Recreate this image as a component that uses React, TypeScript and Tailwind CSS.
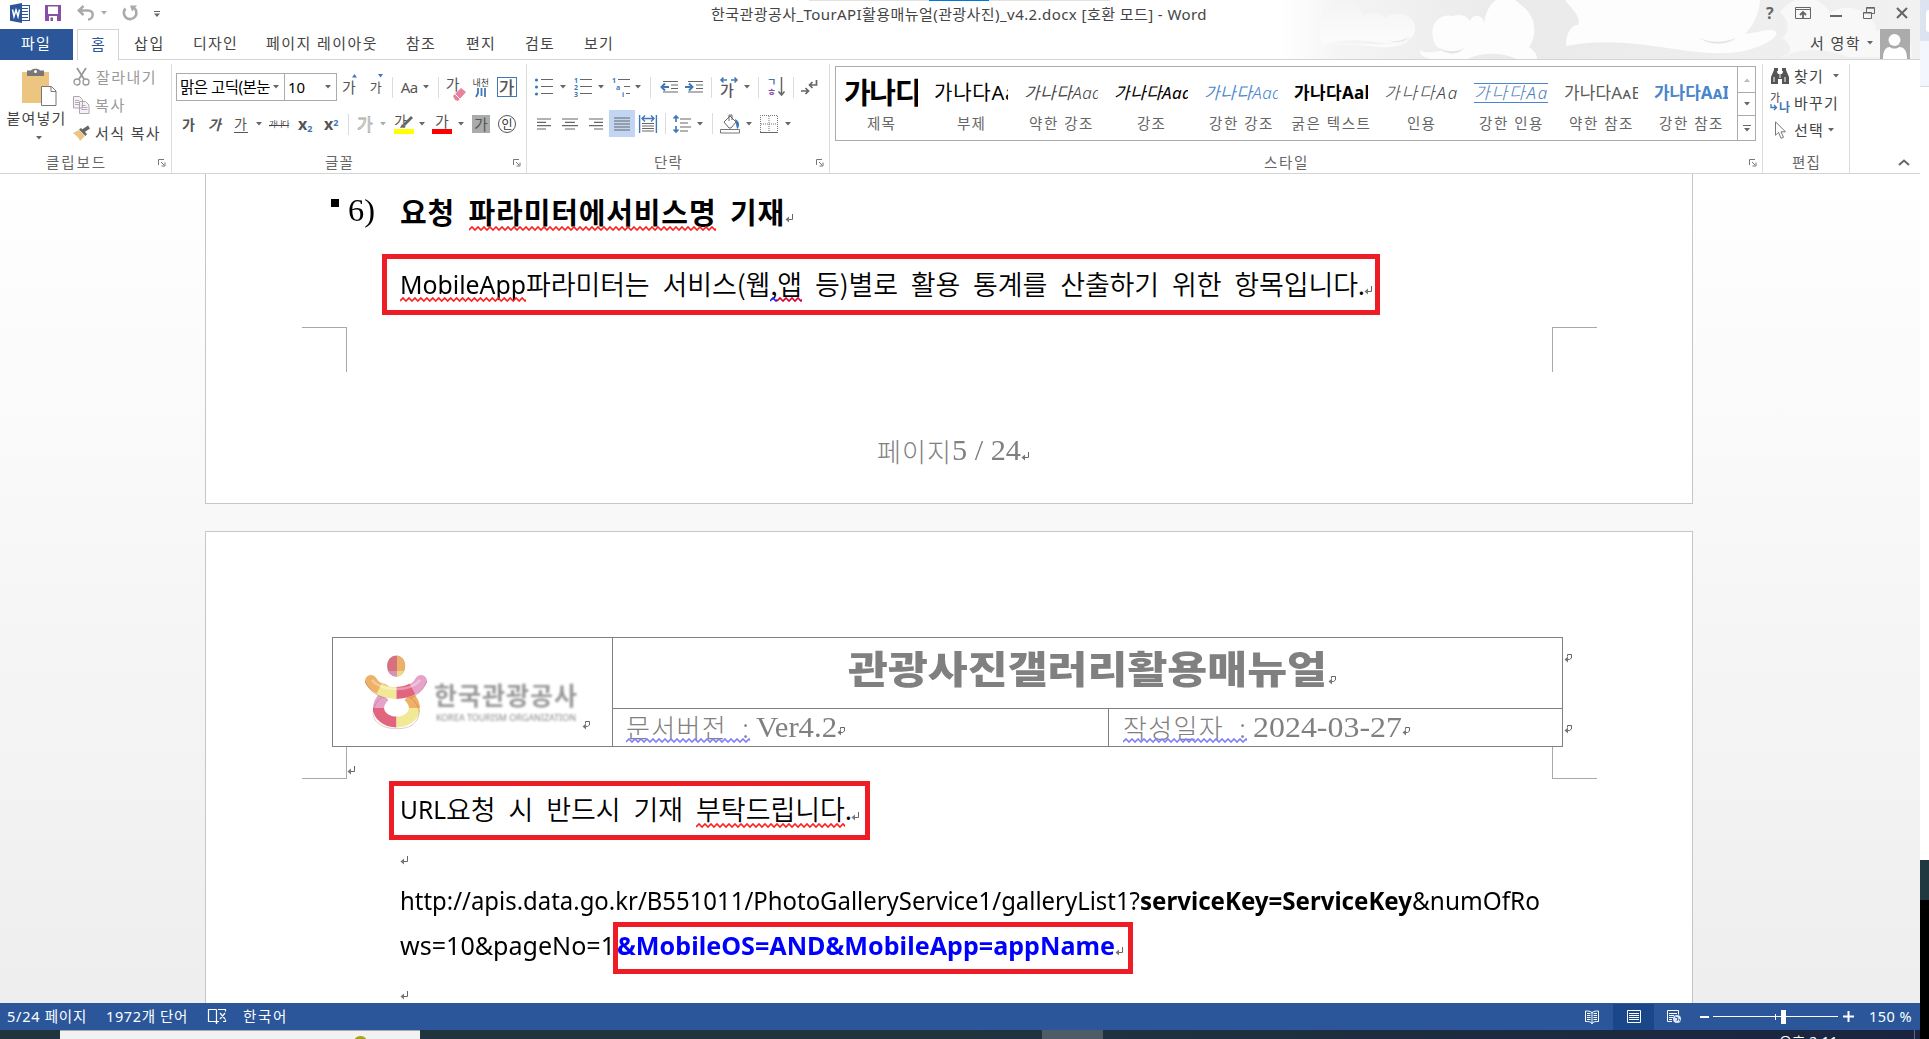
import { useLayoutEffect, useRef, type ReactNode } from 'react';

const UI = "font-['Noto_Sans','Noto_Sans_CJK_KR',sans-serif]";
const KR = "font-['Noto_Sans_CJK_KR',sans-serif]";
const SERIF = "font-['Liberation_Serif','Noto_Sans_CJK_KR',serif]";

/* Text run fitted to a width, either by tracking or by horizontal stretch. */
function T({ w, className = '', stretch = false, children }: { w: number; className?: string; stretch?: boolean; children: ReactNode }) {
  const ref = useRef<HTMLSpanElement>(null);
  useLayoutEffect(() => {
    const el = ref.current;
    if (!el) return;
    el.style.letterSpacing = '0px';
    el.style.transform = 'none';
    const natural = el.getBoundingClientRect().width;
    const count = (el.textContent || ' ').length;
    if (stretch) el.style.transform = `scaleX(${w / natural})`;
    else el.style.letterSpacing = `${(w - natural) / count}px`;
  }, [w, stretch]);
  return (
    <span className={`block shrink-0 whitespace-pre ${className}`} style={{ width: w }}>
      <span ref={ref} className="inline-block origin-left">{children}</span>
    </span>
  );
}

function Squiggle({ color, className = '' }: { color: string; className?: string }) {
  const pts = Array.from({ length: 120 }, (_, i) => `${i * 3},${i % 2 ? 1 : 4}`).join(' ');
  return (
    <svg className={`absolute left-0 h-[5px] w-full overflow-hidden ${className}`}>
      <polyline points={pts} fill="none" stroke={color} strokeWidth="1.700" />
    </svg>
  );
}

const Ret = ({ className = '', cell = false }: { className?: string; cell?: boolean }) => (
  <svg className={`h-[9px] w-[8px] shrink-0 ${className}`} viewBox="0 0 8 9" fill="none" stroke="#666" strokeWidth="1">
    {cell ? <path d="M3.500 2.500V.5h4v3.500L5.500 5.500H2" /> : <path d="M7.500 0v5.500H2" />}
    <path d="M4 2.500v6L.5 5.500z" fill="#777" stroke="none" />
  </svg>
);

const Arrow = ({ className = '', color = '#666' }: { className?: string; color?: string }) => (
  <svg className={`h-[4px] w-[6px] shrink-0 ${className}`} viewBox="0 0 6 4"><path d="M0 0h6L3 3.500z" fill={color} /></svg>
);

const Sep = ({ className = '' }: { className?: string }) => <div className={`h-[21px] w-px shrink-0 bg-[#dcdcdc] ${className}`} />;

const Launcher = ({ className = '' }: { className?: string }) => (
  <svg className={`h-[8px] w-[8px] shrink-0 ${className}`} viewBox="0 0 8 8" fill="none" stroke="#777"><path d="M.5 6V.5H6M3 3l3 3M7 3.500V7H3.500" /></svg>
);

const Ic = ({ w, h, className = '', children }: { w: number; h: number; className?: string; children: ReactNode }) => (
  <svg width={w} height={h} viewBox={`0 0 ${w} ${h}`} fill="none" className={`shrink-0 overflow-visible ${className}`}>{children}</svg>
);

function Clouds() {
  return (
    <svg className="absolute right-0 top-0 h-[59px] w-[640px]" viewBox="0 0 640 59">
      <defs>
        <linearGradient id="fade" x1="0" x2="1"><stop offset="0" stopColor="#fff" /><stop offset=".1" stopColor="#f4f4f4" /><stop offset=".35" stopColor="#eaeaea" /><stop offset="1" stopColor="#f1f1f1" /></linearGradient>
        <linearGradient id="soft" x1="0" x2="0" y1="0" y2="1"><stop offset="0" stopColor="#f4f4f4" /><stop offset="1" stopColor="#fcfcfc" /></linearGradient>
      </defs>
      <rect width="640" height="59" fill="url(#fade)" />
      <g fill="url(#soft)">
        <path d="M42 45C35 20 43 0 60 0c12 0 20 6 23 16 10-6 18-3 22 2 10-9 32-4 30 12-1 5-3 8-7 10-8 3-18 4-32 2-20-3-35-2-54 3z" />
        <path d="M45 46c25-7 50 3 74-5 6-2 9-5 11-4 0 8-16 11-31 10-20-2-35-4-54-1z" />
      </g>
      <g fill="#fdfdfd">
        <path d="M153 38c-4-15 8-25 20-22 10-3 15 2 17 5 4-9 14-5 14 3 4-30 25-32 37-19 15 10 17 30 8 42 4 3 8 6 8 12h-20c-15-7-35-7-50 0h-35c-8-1-12-4-12-8 9 3 22 0 24-2-6 0-10-3-11-11z" />
        <path d="M286 46c0-14 6-21 12-21 4-8-8-18-13-25h195c-1 14-6 24-15 34 15-2 23-6 30-3 7 5-17 21-49 22-47 2-97-19-160-7z" />
      </g>
      <path d="M500 12c14-18 38-20 50 1 20-14 47 2 46 18 22-8 38 8 36 26H500c18-4 8-16 2-19 9-8 7-17-2-26z" fill="#f8f8f8" />
      <path d="M420 38c12 6 26 4 36 0-8 7-27 8-36 0M160 49c12 4 20 2 24-1-4 7-18 7-24 1M106 40c9 3 17 0 22-2-4 5-15 5-22 2" fill="#e4e4e4" />
      <path d="M500 59c20-14 52-10 72 0z" fill="#f0f0f0" />
    </svg>
  );
}

function TitleBar() {
  return (
    <div className="relative flex h-[29px] items-start">
      <div className="absolute left-[809px] top-0 flex h-px w-[301px] bg-[#e2e2e2]"><div className="ml-[120px] w-[60px] bg-[#0078d7]" /></div>
      <Ic w={20} h={20} className="ml-[10px] mt-[3px]">
        <rect x="10.500" y="2.500" width="9" height="15" fill="#fff" stroke="#2b579a" />
        <path d="M12 5.500h6M12 8.500h6M12 11.500h6M12 14.500h6" stroke="#2b579a" />
        <path d="M0 2.200L12 0v20L0 17.800z" fill="#2b579a" />
        <path d="M2.500 6.500l1.500 7 2-6.500 2 6.500 1.500-7" stroke="#fff" strokeWidth="1.500" />
      </Ic>
      <Ic w={16} h={16} className="ml-[15px] mt-[5px]"><path d="M0 0h16v16H0z" fill="#8650a6" /><path d="M3 1.500h10V9H3zM4 11h8v5H4z" fill="#fff" /><path d="M5.500 12.500h2.500v3.500H5.500z" fill="#8650a6" /></Ic>
      <Ic w={17} h={16} className="ml-[16px] mt-[5px]"><path d="M2 5.500h9c7 0 5.500 9 0 9M6.500 1L1.800 5.500l4.700 4.500" stroke="#aaa" strokeWidth="2.500" /></Ic>
      <Arrow className="ml-[7px] mt-[11px]" color="#aaa" />
      <Ic w={16} h={16} className="ml-[15px] mt-[5px]"><path d="M3.500 3.500A6.300 6.300 0 1 0 11.500 2.500" stroke="#aaa" strokeWidth="2.600" /><path d="M8 .5h7l-5 6z" fill="#aaa" /></Ic>
      <Ic w={6} h={6} className="ml-[16px] mt-[11px]"><path d="M0 .5h6" stroke="#666" /><path d="M0 2.500h6L3 6z" fill="#666" /></Ic>
      <T w={496} className="ml-[551px] text-[15px] leading-[29px] text-[#444]">한국관광공사_TourAPI활용매뉴얼(관광사진)_v4.2.docx [호환 모드] - Word</T>
      <span className="relative ml-[559px] w-[9px] text-[16px] font-bold leading-[27px] text-[#666]">?</span>
      <Ic w={16} h={12} className="relative ml-[20px] mt-[7px]"><path d="M.5.500h15v11H.5zM.5 2.500h15" stroke="#666" /><path d="M8 11V5M5 8l3-3 3 3" stroke="#666" strokeWidth="1.800" /></Ic>
      <div className="relative ml-[19px] mt-[15px] h-[2px] w-[12px] bg-[#666]" />
      <Ic w={12} h={12} className="relative ml-[21px] mt-[7px]"><path d="M.5 5.500h8v6h-8zM.5 6h8M3.500 5V.5h8v6H9M3.500 1.200h8" stroke="#666" /></Ic>
      <Ic w={12} h={12} className="relative ml-[21px] mt-[7px]"><path d="M1 1l10 10M11 1L1 11" stroke="#666" strokeWidth="2" /></Ic>
    </div>
  );
}

function Tabs() {
  const t = 'text-[15px] leading-[29px] text-[#444]';
  return (
    <div className="relative flex h-[31px]">
      <div className="flex w-[73px] shrink-0 bg-[#2b579a] pl-[21px]"><T w={30} className="text-[15px] leading-[29px] text-white">파일</T></div>
      <div className="ml-[4px] flex w-[42px] shrink-0 border border-b-0 border-[#d4d4d4] bg-white pl-[13px]"><T w={15} className="text-[15px] leading-[28px] text-[#2b579a]">홈</T></div>
      <div className="flex flex-1 border-b border-[#d4d4d4] pl-[15px]">
        <T w={31} className={t}>삽입</T>
        <T w={45} className={`ml-[28px] ${t}`}>디자인</T>
        <T w={112} className={`ml-[28px] ${t}`}>페이지 레이아웃</T>
        <T w={30} className={`ml-[28px] ${t}`}>참조</T>
        <T w={30} className={`ml-[30px] ${t}`}>편지</T>
        <T w={30} className={`ml-[29px] ${t}`}>검토</T>
        <T w={30} className={`ml-[29px] ${t}`}>보기</T>
        <T w={51} className={`ml-auto ${t}`}>서 영학</T>
        <Arrow className="ml-[6px] mt-[12px]" />
        <Ic w={30} h={30} className="ml-[7px] mr-[10px]"><rect width="30" height="30" fill="#ababab" /><circle cx="14.500" cy="11" r="6" fill="#fff" /><path d="M3 30c0-9 3-12 7-12 2 2 7 2 9 0 5 0 8 3 8 12z" fill="#fff" /></Ic>
      </div>
    </div>
  );
}

function GroupLabel({ w, text, left, launch }: { w: number; text: string; left: string; launch?: string }) {
  return (
    <div className="flex h-[16px] items-start">
      <T w={w} className={`${left} -mt-px text-[14.500px] leading-[16px] text-[#666]`}>{text}</T>
      {launch && <Launcher className={`mt-[4px] ${launch}`} />}
    </div>
  );
}

const Ga = ({ className = '' }: { className?: string }) => <span className={`${KR} block shrink-0 leading-[20px] text-[#555] ${className}`}>가</span>;
const blue = '#3f78b8';

function Clipboard() {
  return (
    <div className="flex h-[109px] w-[172px] shrink-0 flex-col border-r border-[#dcdcdc]">
      <div className="flex h-[91px]">
        <div className="flex w-[73px] flex-col items-center">
          <Ic w={36} h={39} className="ml-[5px] mt-[4px]">
            <path d="M1 4h27v31H1z" fill="#ecc680" /><path d="M6 2.500h4C11 0 18 0 19 2.500h4V8H6z" fill="#777" /><circle cx="14.500" cy="3.500" r="1.500" fill="#fff" />
            <path d="M20.500 18.500h10l4.500 4.500v14.500H20.500z" fill="#fff" stroke="#777" /><path d="M30 18.500V23.500h5" stroke="#777" />
          </Ic>
          <T w={60} className="mt-px text-[15px] leading-[20px] text-[#444]">붙여넣기</T>
          <Arrow className="mt-[8px] mr-[-4px]" />
        </div>
        <div className="-mt-px flex flex-col">
          <div className="flex h-[28px] items-center">
            <Ic w={17} h={18}><path d="M4 0l7 11M13 0L6 11" stroke="#999" strokeWidth="1.800" /><circle cx="4" cy="14" r="3" stroke="#999" strokeWidth="1.300" /><circle cx="13" cy="14" r="3" stroke="#999" strokeWidth="1.300" /></Ic>
            <T w={61} className="-mt-px ml-[6px] text-[15px] leading-[20px] text-[#999]">잘라내기</T>
          </div>
          <div className="flex h-[28px] items-center">
            <Ic w={17} h={18}><path d="M.5.500h6l3 3v8.500h-9zM6.500 5.500h6l3.500 3.500v8.500H6.500z" fill="#f6f1f8" stroke="#aaa" /><path d="M2 4.500h4M2 6.500h4M2 8.500h4M8.500 9.500h4M8.500 11.500h6M8.500 13.500h6" stroke="#b9a9c0" /></Ic>
            <T w={31} className="-mt-px ml-[5px] text-[15px] leading-[20px] text-[#999]">복사</T>
          </div>
          <div className="flex h-[28px] items-center">
            <Ic w={17} h={15}><path d="M0 7l6-3 6 6-5 5c-1-3-4-6-7-8z" fill="#ecc680" /><path d="M6 3.500l2-1.500 6 6-1.500 2z" fill="#666" /><path d="M10 5l6-4" stroke="#666" strokeWidth="3.500" /></Ic>
            <T w={66} className="-mt-px ml-[5px] text-[15px] leading-[20px] text-[#444]">서식 복사</T>
          </div>
        </div>
      </div>
      <GroupLabel w={61} text="클립보드" left="ml-[46px]" launch="ml-[51px]" />
    </div>
  );
}

function FontGroup() {
  return (
    <div className="flex h-[109px] w-[355px] shrink-0 flex-col border-r border-[#dcdcdc]">
      <div className="mt-[9px] flex h-[28px] items-center">
        <div className="ml-[4px] flex h-[28px] w-[109px] items-center overflow-hidden border border-[#ababab] pl-[3px]"><T w={90} className="-mt-px overflow-hidden text-[15.500px] leading-[24px] text-black">맑은 고딕(본눈</T><Arrow className="relative ml-[3px]" /></div>
        <div className="-ml-px flex h-[28px] w-[53px] items-center border border-[#ababab] pl-[3px]"><span className="w-[34px] text-[15px] text-black">10</span><Arrow className="ml-[3px]" /></div>
        <div className="relative ml-[5px]"><Ga className="text-[15px] leading-[26px]" /><svg className="absolute left-[10px] top-0 h-[4px] w-[6px]"><path d="M0 3.500h5L2.500 0z" fill={blue} /></svg></div>
        <div className="relative ml-[14px]"><Ga className="text-[13px] leading-[26px]" /><svg className="absolute left-[8px] top-0 h-[4px] w-[6px]"><path d="M0 0h5L2.500 3.500z" fill={blue} /></svg></div>
        <Sep className="ml-[10px]" />
        <span className="ml-[8px] w-[19px] text-[15px] tracking-[-.5px] text-[#555]">Aa</span><Arrow className="ml-[3px]" />
        <Sep className="ml-[9px]" />
        <div className="relative ml-[7px] w-[20px]"><Ga className="mt-[-6px] text-[15px] leading-[20px]" /><Ic w={13} h={13} className="absolute left-[7px] top-[8px]"><path d="M0 8l8-8 5 4-8 9-3-1z" fill="#e8829a" /><path d="M2 6l5 5" stroke="#fff" /></Ic></div>
        <div className="ml-[6px] flex w-[18px] flex-col items-center"><span className={`${KR} whitespace-nowrap text-[9px] leading-[10px] text-[#444]`}>내천</span><Ic w={10} h={9}><path d="M2 0v5L0 9M5.500 0v8M9 0v9" stroke={blue} strokeWidth="1.800" /></Ic></div>
        <div className="ml-[7px] h-[20px] w-[20px] border border-[#3f78b8]"><Ga className="ml-[1px] text-[17px] font-medium !leading-[17px] text-[#333]" /></div>
      </div>
      <div className="mt-[10px] flex h-[26px] items-center">
        <Ga className="ml-[10px] w-[14px] text-[14px] font-bold" />
        <Ga className="ml-[12px] w-[14px] text-[14px] font-bold italic" />
        <Ga className="ml-[12px] w-[14px] border-b border-[#555] text-[14px] !leading-[17px]" /><Arrow className="ml-[8px]" />
        <div className="relative ml-[7px]"><T w={20} className="text-[8px] leading-[14px] text-[#444]">가나다</T><div className="absolute inset-x-0 top-[8px] h-px bg-[#444]" /></div>
        <span className="ml-[9px] w-[15px] text-[16px] font-bold leading-[20px] text-[#555]">x<sub className="text-[9px] text-[#3f78b8]">2</sub></span>
        <span className="ml-[11px] w-[15px] text-[16px] font-bold leading-[20px] text-[#555]">x<sup className="text-[9px] text-[#3f78b8]">2</sup></span>
        <Sep className="ml-[9px]" />
        <span className={`${KR} ml-[8px] w-[17px] text-[17px] leading-[20px] text-white [-webkit-text-stroke:0.800px_#aaa]`}>가</span><Arrow className="ml-[6px]" color="#aaa" />
        <div className="relative ml-[8px] h-[20px] w-[20px] border-b-[5px] border-[#ffff00]"><Ga className="text-[14px] !leading-[12px]" /><Ic w={14} h={14} className="absolute left-[6px] top-[1px]"><path d="M3 9l8-8 2 2-8 8zM0 13l2-4 4 3z" fill="#666" /></Ic></div><Arrow className="ml-[5px]" />
        <div className="ml-[7px] h-[20px] w-[20px] border-b-[5px] border-[#ff0000]"><Ga className="ml-[3px] text-[15px] !leading-[13px]" /></div><Arrow className="ml-[6px]" />
        <div className="ml-[8px] h-[18px] w-[18px] bg-[#ababab]"><Ga className="ml-[2px] text-[15px] !leading-[17px] text-[#333]" /></div>
        <div className="ml-[8px] flex h-[18px] w-[18px] items-center justify-center rounded-full border border-[#555]"><span className={`${KR} text-[12px] leading-[16px] text-[#333]`}>인</span></div>
      </div>
      <div className="h-[18px]" />
      <GroupLabel w={29} text="글꼴" left="ml-[153px]" launch="ml-[159px]" />
    </div>
  );
}

const Lines = ({ d, w = 17 }: { d: string; w?: number }) => <Ic w={w} h={14}><path d={d} stroke="#666" strokeWidth="1.200" /></Ic>;

function ParagraphGroup() {
  const digit = 'fill-[#3f78b8] text-[7px] font-bold';
  return (
    <div className="flex h-[109px] w-[303px] shrink-0 flex-col border-r border-[#dcdcdc]">
      <div className="mt-[12px] flex h-[22px] items-center">
        <Ic w={18} h={18} className="ml-[8px]"><circle cx="1.500" cy="2" r="1.600" fill={blue} /><circle cx="1.500" cy="9" r="1.600" fill={blue} /><circle cx="1.500" cy="16" r="1.600" fill={blue} /><path d="M6 1.500h12M6 8.500h12M6 15.500h12" stroke="#666" /></Ic><Arrow className="ml-[7px]" />
        <Ic w={18} h={18} className="ml-[8px]"><text x="0" y="4.500" className={digit}>1</text><text x="0" y="11.500" className={digit}>2</text><text x="0" y="18.500" className={digit}>3</text><path d="M6 1.500h12M6 8.500h12M6 15.500h12" stroke="#666" /></Ic><Arrow className="ml-[6px]" />
        <Ic w={18} h={18} className="ml-[8px]"><text x="0" y="4.500" className={digit}>1</text><text x="4" y="11.500" className={digit}>a</text><text x="10" y="18.500" className={digit}>i</text><path d="M6 1.500h12M12 8.500h6M14 15.500h4" stroke="#666" /></Ic><Arrow className="ml-[5px]" />
        <Sep className="ml-[9px]" />
        <Ic w={18} h={12} className="ml-[9px]"><path d="M3 .5h15M11 4h7M11 7.500h7M3 11h15" stroke="#666" strokeWidth="1.100" /><path d="M9 6H2M5 2.500L1.500 6 5 9.500" stroke={blue} strokeWidth="2" /></Ic>
        <Ic w={18} h={12} className="ml-[7px]"><path d="M3 .5h15M11 4h7M11 7.500h7M3 11h15" stroke="#666" strokeWidth="1.100" /><path d="M0 6h7M4 2.500L7.500 6 4 9.500" stroke={blue} strokeWidth="2" /></Ic>
        <Sep className="ml-[8px]" />
        <div className="relative ml-[8px] h-[20px] w-[18px]"><Ga className="text-[15px] font-medium !leading-[25px]" /><Ic w={18} h={6} className="absolute left-0 top-0"><path d="M7 3H1M3.500.500L1 3l2.500 2.500M11 3h6M14.500.500L17 3l-2.500 2.500" stroke={blue} strokeWidth="1.500" /></Ic></div><Arrow className="ml-[6px]" />
        <Sep className="ml-[8px]" />
        <div className="ml-[8px] flex h-[20px] w-[18px]"><div className={`${KR} w-[10px] text-[10px] font-bold leading-[10px]`}><div className="text-[#3f78b8]">ㄱ</div><div className="text-[#8650a6]">ㅎ</div></div><Ic w={8} h={19}><path d="M4.500 0v18M1.500 14.500l3 3.500 3-3.500" stroke="#666" strokeWidth="1.500" /></Ic></div>
        <Sep className="ml-[8px]" />
        <Ic w={17} h={15} className="ml-[7px]"><path d="M15.500 0v5H9M11.500 2L8.500 5l3 3M0 11h7M4.500 8l3 3-3 3" stroke="#666" strokeWidth="1.700" /></Ic>
      </div>
      <div className="mt-[12px] flex h-[27px] items-center">
        <div className="ml-[10px]"><Lines w={15} d="M0 2h14M0 5.300h9M0 8.600h14M0 12h9" /></div>
        <div className="ml-[10px]"><Lines d="M0 2h16M3 5.300h10M0 8.600h16M3 12h10" /></div>
        <div className="ml-[10px]"><Lines w={15} d="M0 2h14M5 5.300h9M0 8.600h14M5 12h9" /></div>
        <div className="ml-[5px] flex h-[27px] w-[26px] items-center justify-center bg-[#c2d5f2]"><Lines w={16} d="M0 1h16M0 4h16M0 7h16M0 10h16M0 13h16" /></div>
        <Ic w={18} h={18} className="ml-[4px]"><path d="M.6 0v18M17.400 0v18M3 3.500h12M6 .5l-3 3 3 3M12 .5l3 3-3 3" stroke={blue} strokeWidth="1.400" /><path d="M3 8.500h12M3 11h12M3 13.500h12M3 16h12" stroke="#666" /></Ic>
        <Sep className="ml-[8px]" />
        <Ic w={18} h={18} className="ml-[7px]"><path d="M3 1v6M.5 3.500L3 1l2.500 2.500M3 11v6M.5 14.500L3 17l2.500-2.500" stroke={blue} strokeWidth="1.700" /><path d="M7 4h11M7 8h8M7 12h11M7 16h8" stroke="#666" strokeWidth="1.100" /></Ic><Arrow className="ml-[6px]" />
        <Sep className="ml-[9px]" />
        <Ic w={20} h={20} className="ml-[7px]"><path d="M4 8l6-6 6 6-5 6H9z" stroke="#666" fill="#fff" /><path d="M9 7V1h3v5" stroke="#666" /><path d="M15 5c5 2 5 8 2 10z" fill={blue} /><path d="M.5 15.500h19v3.500H.5z" fill="#fff" stroke="#777" /></Ic><Arrow className="ml-[6px]" />
        <Ic w={18} h={18} className="ml-[8px]"><path d="M.5 17V.5h17V17M9 1v16M1 9h16" stroke="#777" strokeDasharray="1 1" /><path d="M0 17.500h18" stroke="#666" /></Ic><Arrow className="ml-[7px]" />
      </div>
      <div className="h-[18px]" />
      <GroupLabel w={29} text="단락" left="ml-[127px]" launch="ml-[133px]" />
    </div>
  );
}

const styles: { p: string; label: string; w: number; pw: number; cls: string }[] = [
  { p: '가나디', label: '제목', w: 29, pw: 76, cls: 'text-[29px] font-bold text-black' },
  { p: '가나다Aa', label: '부제', w: 29, pw: 83, cls: 'text-[20px] text-black' },
  { p: '가나다Aaa', label: '약한 강조', w: 65, pw: 78, cls: 'text-[17px] italic font-[350] text-[#404040]' },
  { p: '가나다Aaa', label: '강조', w: 29, pw: 78, cls: 'text-[17px] italic text-black' },
  { p: '가나다Aaa', label: '강한 강조', w: 65, pw: 78, cls: 'text-[17px] italic font-[350] text-[#4a86cc]' },
  { p: '가나다Aal', label: '굵은 텍스트', w: 80, pw: 76, cls: 'text-[17px] font-bold text-black' },
  { p: '가나다Aa', label: '인용', w: 29, pw: 75, cls: 'text-[17px] italic font-light text-[#404040]' },
  { p: '가나다Aa', label: '강한 인용', w: 65, pw: 75, cls: 'text-[17px] italic font-light text-[#4a7ebb] border-y border-[#4a86cc] !leading-[18px]' },
  { p: '가나다AᴀE', label: '약한 참조', w: 65, pw: 77, cls: 'text-[17px] text-[#5a5a5a]' },
  { p: '가나다AᴀI', label: '강한 참조', w: 65, pw: 75, cls: 'text-[17px] font-bold text-[#4a86cc]' },
];

function StylesGroup() {
  return (
    <div className="flex h-[109px] w-[933px] shrink-0 flex-col border-r border-[#dcdcdc]">
      <div className="ml-[5px] mt-[2px] flex h-[75px] w-[921px] border border-[#ababab] bg-white">
        {styles.map((s) => (
          <div key={s.label} className="flex w-[90px] shrink-0 flex-col items-center">
            <div className="flex h-[46px] w-[74px] items-center overflow-hidden pt-[6px]"><T w={s.pw} className={`leading-[24px] ${s.cls}`}>{s.p}</T></div>
            <T w={s.w} className="ml-px text-[14.500px] leading-[20px] text-[#666]">{s.label}</T>
          </div>
        ))}
        <div className="ml-px flex w-[18px] flex-col border-l border-[#ababab]">
          <div className="flex h-[26px] items-center justify-center border-b border-[#ababab]"><Ic w={6} h={4}><path d="M0 4h6L3 .5z" fill="#bbb" /></Ic></div>
          <div className="flex h-[23px] items-center justify-center border-b border-[#ababab]"><Arrow /></div>
          <div className="flex flex-1 items-center justify-center"><Ic w={8} h={7}><path d="M0 .5h8" stroke="#666" /><path d="M1 3h6L4 6.500z" fill="#666" /></Ic></div>
        </div>
      </div>
      <div className="h-[14px]" />
      <GroupLabel w={45} text="스타일" left="ml-[434px]" launch="ml-[440px]" />
    </div>
  );
}

function EditGroup() {
  const t = '-mt-px text-[15px] leading-[20px] text-[#444]';
  return (
    <div className="flex h-[109px] w-[87px] shrink-0 flex-col border-r border-[#dcdcdc]">
      <div className="flex h-[24px] items-center pl-[8px]">
        <Ic w={18} h={16}><path d="M0 16V9l3-7h3v2l1 2h4l1-2V2h3l3 7v7h-7v-5H7v5z" fill="#555" /><path d="M3 0h4v3H3zM11 0h4v3h-4z" fill="#555" /><path d="M3 9v5M14 9v5M9 6v4" stroke="#fff" /></Ic>
        <T w={30} className={`ml-[5px] ${t}`}>찾기</T><Arrow className="ml-[9px]" />
      </div>
      <div className="mt-[3px] flex h-[24px] items-center pl-[7px]">
        <div className="relative h-[20px] w-[20px]"><span className={`${KR} absolute left-0 top-0 text-[11px] leading-[9px] text-[#444]`}>가</span><span className={`${KR} absolute left-[9px] top-[9px] text-[12px] font-bold leading-[10px] text-[#3f78b8]`}>나</span><Ic w={8} h={8} className="absolute left-0 top-[11px]"><path d="M1 0v3.500h5M4 1l2.500 2.500L4 6" stroke={blue} strokeWidth="1.300" /></Ic></div>
        <T w={45} className={`ml-[4px] ${t}`}>바꾸기</T>
      </div>
      <div className="mt-[3px] flex h-[24px] items-center pl-[12px]">
        <Ic w={11} h={18}><path d="M.5.800v13.500l3-3 2.500 6 2.500-1-2.500-5.500h4.500z" fill="#fff" stroke="#777" /></Ic>
        <T w={30} className={`ml-[8px] ${t}`}>선택</T><Arrow className="ml-[4px]" />
      </div>
      <div className="h-[13px]" />
      <GroupLabel w={29} text="편집" left="ml-[29px]" />
    </div>
  );
}

const body = `${KR} text-[27px] font-[350] leading-[40px] text-black [word-spacing:7px]`;
const latin = 'text-[25px] leading-[40px] text-black';
const mark = 'w-[45px] shrink-0 border-[#a9a9a9]';
const headKr = `${KR} text-[26px] font-light leading-[36px] text-[#808080] [word-spacing:8px]`;
const headNum = `${SERIF} text-[29px] leading-[37px] text-[#808080]`;

function Logo() {
  return (
    <svg width="64" height="76" viewBox="0 0 64 76" fill="none" className="shrink-0 blur-[0.600px]">
      <ellipse cx="32" cy="12" rx="9" ry="10.500" fill="#d8717f" />
      <path d="M33 1.500c11 1 11 20 0 21z" fill="#eab268" /><path d="M24 17h9v5.500c-4 0-7-2-9-5.500z" fill="#d892b6" /><path d="M33 17h7c-2 4-4 5.500-7 5.500z" fill="#e8dc86" />
      <g strokeWidth="11"><path d="M21 42c-5 4-7 9-6.500 15" stroke="#e6a3ca" /><path d="M14.500 54c0 7 7 14 18 14" stroke="#e2657f" /><path d="M44 42c5 4 7 9 6.500 15" stroke="#efb168" /><path d="M50.500 54c0 7-7 14-18 14" stroke="#f1e996" /></g>
      <g strokeWidth="12"><path d="M7 27c4 7 9 8 13 9" stroke="#efb168" strokeLinecap="round" /><path d="M57 27c-4 7-7 8-11 9" stroke="#e6a3ca" strokeLinecap="round" /><path d="M15 35c5 2.500 12 4 17.500 4" stroke="#f1e996" /><path d="M32.500 39c6 0 11-1.500 16-4" stroke="#e2657f" /></g>
      <g stroke="#803040" strokeOpacity=".25"><path d="M1 27c4 10 12 15 20 17M63 27c-4 10-10 15-18 17M17 44C7 52 6 66 17 71c8 5 24 5 31 0 10-7 9-19-1-27" /></g>
      <path d="M8 26c4 5 12 9 24 9s20-4 24-9" stroke="#fff" strokeOpacity=".35" strokeWidth="2.500" />
    </svg>
  );
}

function Document() {
  return (
    <div className="h-[829px] overflow-hidden bg-linear-to-b from-white to-[#eeeeee] pl-[205px]">
      <div className="h-[330px] w-[1488px] border border-t-0 border-[#c6c6c6] bg-white">
        <div className="flex h-[80px] items-start pt-[18px]">
          <div className="ml-[125px] mt-[7px] h-[8px] w-[8px] shrink-0 bg-black" />
          <T w={27} stretch className={`${SERIF} ml-[9px] text-[31px] leading-[38px] text-black`}>6)</T>
          <T w={385} className={`${KR} ml-[25px] text-[29px] font-bold leading-[38px] text-black [word-spacing:6px]`}>요청 <span className="relative inline-block">파라미터에서비스명<Squiggle color="#ff2020" className="top-[34px]" /></span> 기재</T>
          <Ret className="mt-[22px]" />
        </div>
        <div className="ml-[176px] flex h-[61px] w-[998px] border-[5px] border-[#ee1c25] pl-[13px] pt-[5px]">
          <T w={126} stretch className={latin}><span className="relative inline-block">MobileApp<Squiggle color="#ff2020" className="top-[33px]" /></span></T>
          <T w={839} className={body}>파라미터는 서비스(웹<span className="relative inline-block">,<Squiggle color="#2020ff" className="top-[33px]" /></span><span className="relative inline-block">앱<Squiggle color="#e00030" className="top-[33px]" /></span> 등)별로 활용 통계를 산출하기 위한 항목입니다.</T>
          <Ret className="-ml-px mt-[22px]" />
        </div>
        <div className="mt-[12px] flex h-[45px]">
          <div className={`ml-[96px] border-r border-t ${mark}`} />
          <div className={`ml-[1205px] border-l border-t ${mark}`} />
        </div>
        <div className="flex pt-[60px]">
          <T w={75} className={`${headKr} ml-[671px] !leading-[38px]`}>페이지</T>
          <T w={69} stretch className={`${headNum} !leading-[36px]`}>5 / 24</T>
          <Ret className="mt-[20px]" />
        </div>
      </div>
      <div className="mt-[27px] h-[480px] w-[1488px] border border-b-0 border-[#c6c6c6] bg-white">
        <div className="ml-[126px] mt-[105px] flex h-[110px]">
          <div className="flex w-[1231px] border border-[#808080]">
            <div className="flex w-[280px] shrink-0 border-r border-[#808080] pl-[31px] pt-[16px]">
              <Logo />
              <div className="mt-[24px] ml-[6px] blur-[0.800px]">
                <T w={144} className={`${KR} text-[25px] font-bold leading-[33px] text-[#999]`}>한국관광공사</T>
                <T w={140} stretch className="ml-[2px] mt-[2px] text-[9px] leading-[10px] text-[#888]">KOREA TOURISM ORGANIZATION</T>
              </div>
              <Ret cell className="ml-[4px] mt-[67px]" />
            </div>
            <div className="flex-1">
              <div className="flex h-[71px] border-b border-[#808080] pl-[235px] pt-[7px]">
                <T w={479} stretch className={`${KR} text-[38px] font-black leading-[44px] text-[#808080]`}>관광사진갤러리활용매뉴얼</T>
                <Ret cell className="ml-[1px] mt-[31px]" />
              </div>
              <div className="flex h-[37px]">
                <div className="flex w-[496px] border-r border-[#808080] pl-[13px]">
                  <T w={124} className={headKr}><span className="relative inline-block">문서버전 :<Squiggle color="#8080ff" className="top-[29px]" /></span></T>
                  <T w={81} stretch className={`ml-[6px] ${headNum}`}>Ver4.2</T>
                  <Ret cell className="mt-[18px]" />
                </div>
                <T w={124} className={`ml-[14px] ${headKr}`}><span className="relative inline-block">작성일자 :<Squiggle color="#8080ff" className="top-[29px]" /></span></T>
                <T w={149} stretch className={`ml-[6px] ${headNum}`}>2024-03-27</T>
                <Ret cell className="mt-[18px]" />
              </div>
            </div>
          </div>
          <div className="ml-[1px]"><Ret cell className="mt-[17px]" /><Ret cell className="mt-[62px]" /></div>
        </div>
        <div className="flex h-[34px]">
          <div className={`ml-[96px] h-[32px] border-b border-r ${mark}`} />
          <Ret className="mt-[19px]" />
          <div className={`ml-[1197px] h-[32px] border-b border-l ${mark}`} />
        </div>
        <div className="ml-[183px] flex h-[59px] w-[481px] border-[5px] border-[#ee1c25] pl-[6px] pt-[3px]">
          <T w={46} stretch className={latin}>URL</T>
          <T w={406} className={body}>요청 시 반드시 기재 <span className="relative inline-block">부탁드립니다<Squiggle color="#ff2020" className="top-[34px]" /></span>.</T>
          <Ret className="-ml-px mt-[23px]" />
        </div>
        <div className="flex h-[38px] items-center"><Ret className="ml-[194px] mt-[2px]" /></div>
        <div className="flex h-[44px] items-center">
          <T w={740} stretch className={`ml-[194px] ${latin}`}>http://apis.data.go.kr/B551011/PhotoGalleryService1/galleryList1?</T>
          <T w={272} stretch className={`font-bold ${latin}`}>serviceKey=ServiceKey</T>
          <T w={128} stretch className={latin}>&amp;numOfRo</T>
        </div>
        <div className="flex h-[52px]">
          <T w={215} stretch className={`ml-[194px] mr-[-2px] pt-[3px] ${latin}`}>ws=10&amp;pageNo=1</T>
          <div className="relative flex w-[520px] border-[5px] border-[#ee1c25]">
            <T w={498} stretch className="-mt-[2px] -ml-px text-[25px] font-bold leading-[40px] text-[#0000ff]">&amp;MobileOS=AND&amp;MobileApp=appName</T>
            <Ret className="mt-[20px]" />
          </div>
        </div>
        <Ret className="ml-[194px] mt-[17px]" />
      </div>
    </div>
  );
}

function StatusBar() {
  const t = 'text-[14.500px] leading-[26px] -mt-px text-white';
  return (
    <div className="flex h-[27px] items-center bg-[#2b579a]">
      <T w={80} className={`ml-[7px] ${t}`}>5/24 페이지</T>
      <T w={82} className={`ml-[19px] ${t}`}>1972개 단어</T>
      <Ic w={18} h={16} className="ml-[20px] mt-[-2px]"><path d="M8.500 1.500H.5v12h7l1 1 1-1h1.500M8.500 1.500V16M10 1.500h7.500v2M17.500 11.500v2H15M12 5l5 6M17 5l-5 6" stroke="#fff" strokeWidth="1.200" /></Ic>
      <T w={45} className={`ml-[17px] ${t}`}>한국어</T>
      <Ic w={14} h={14} className="ml-auto"><path d="M7 2.500C5 1 3 1 .5 1v10.500c3 0 5 0 6.500 2 1.500-2 3.500-2 6.500-2V1C11 1 9 1 7 2.500zM7 2v12" stroke="#fff" /><path d="M2 3.500h3.500M2 5.500h3.500M2 7.500h3.500M2 9.500h3.500M8.500 3.500H12M8.500 5.500H12M8.500 7.500H12M8.500 9.500H12" stroke="#fff" /></Ic>
      <div className="ml-[14px] flex h-[26px] w-[41px] items-center justify-center bg-[#19478a]"><Ic w={14} h={13}><path d="M.5.500h13v12H.5zM2 3.500h10M2 5.500h10M2 7.500h10M2 9.500h10" stroke="#fff" /></Ic></div>
      <Ic w={14} h={14} className="ml-[13px]"><path d="M5 11.500H.5V.5h11v4M2 3.500h8M2 5.500h5M2 7.500h4M2 9.500h3" stroke="#fff" /><circle cx="10" cy="9" r="4" fill="#dfe6f2" /><path d="M8 7l3 1-1 3M12 9l1 2" stroke="#2b579a" /></Ic>
      <div className="ml-[19px] h-[2px] w-[9px] bg-white" />
      <div className="relative ml-[4px] flex h-[14px] w-[125px] items-center"><div className="h-px w-full bg-white" /><div className="absolute left-[62px] top-[4px] h-[6px] w-px bg-white" /><div className="absolute left-[68px] top-0 h-[14px] w-[5px] bg-white" /></div>
      <Ic w={11} h={11} className="ml-[5px]"><path d="M5.500 0v11M0 5.500h11" stroke="#fff" strokeWidth="2" /></Ic>
      <T w={43} className={`ml-[15px] mr-[8px] ${t}`}>150 %</T>
    </div>
  );
}

function Taskbar() {
  return (
    <div className="flex h-[9px] overflow-hidden bg-linear-to-r from-[#20343e] from-50% to-[#1a2440]">
      <div className="ml-[60px] flex w-[360px] shrink-0 border-t border-[#aaa] bg-[#f2f2f2]"><div className="ml-[294px] mt-[5px] h-[12px] w-[13px] rounded-full bg-[#aaa41a]" /></div>
      <div className="ml-[622px] w-[61px] shrink-0 bg-[#4d5c65]" />
      <T w={59} className="ml-[676px] mt-[3px] text-[14px] leading-[18px] text-white">오후 2:11</T>
      <div className="ml-[76px] w-px bg-[#667]" />
    </div>
  );
}

export default function App() {
  return (
    <div className={`flex h-[1039px] w-[1929px] overflow-hidden bg-white ${UI}`}>
      <div className="flex w-[1920px] shrink-0 flex-col">
        <div className="relative h-[60px]">
          <Clouds />
          <TitleBar />
          <Tabs />
        </div>
        <div className="flex h-[114px] border-b border-[#d4d4d4] bg-white pt-[4px]">
          <Clipboard />
          <FontGroup />
          <ParagraphGroup />
          <StylesGroup />
          <EditGroup />
          <Ic w={12} h={7} className="ml-[48px] mt-[95px]"><path d="M1 6l5-4.500L11 6" stroke="#666" strokeWidth="2" /></Ic>
        </div>
        <Document />
        <StatusBar />
        <Taskbar />
      </div>
      <div className="flex w-[9px] flex-col">
        <div className="h-[41px] bg-[#dde4f1] pl-[6px] pt-[10px]"><div className="h-[22px] rounded-l-full bg-white" /></div>
        <div className="h-[46px] border-b border-[#d3dcec] bg-[#f3f6fc]" />
        <div className="h-[773px] bg-white" />
        <div className="h-[40px] bg-[#20383f]" />
        <div className="flex-1 bg-black" />
      </div>
    </div>
  );
}
